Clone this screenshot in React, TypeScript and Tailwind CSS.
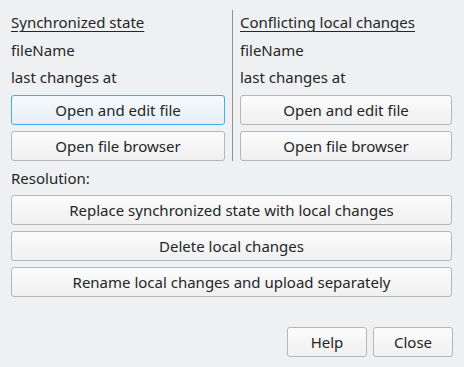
import React from 'react';

const font = { fontFamily: '"Noto Sans", "Open Sans", sans-serif' };

const Btn: React.FC<{ label: string; focused?: boolean; className?: string }> = ({ label, focused, className = '' }) => (
  <button
    className={`h-[30px] rounded-[3px] border text-[15px] leading-[19px] text-[#232627] ${
      focused
        ? 'border-[#3daee9] bg-gradient-to-b from-[#f6fafd] to-[#e7eef4]'
        : 'border-[#b4b6b8] bg-gradient-to-b from-[#fcfcfc] to-[#f0f0f0]'
    } ${className}`}
  >
    {label}
  </button>
);

const Column: React.FC<{ title: string; focused?: boolean }> = ({ title, focused }) => (
  <div className="flex flex-col pt-[13px]">
    <div className="h-[28px] leading-[19px]">
      <span className="underline underline-offset-[3px] decoration-1">{title}</span>
    </div>
    <div className="h-[27px] leading-[19px]">fileName</div>
    <div className="h-[27px] leading-[19px]">last changes at</div>
    <div className="flex flex-col gap-[6px]">
      <Btn label="Open and edit file" focused={focused} />
      <Btn label="Open file browser" />
    </div>
  </div>
);

export default function App() {
  return (
    <div className="w-[464px] h-[367px] bg-[#eff0f1] text-[15px] text-[#232627] px-[11px]" style={font}>
      <div className="flex">
        <div className="w-[214px]">
          <Column title="Synchronized state" focused />
        </div>
        <div className="w-[15px] flex justify-center">
          <div className="w-px bg-[#8f9193] mt-[10px] h-[151px] ml-[-1px]" />
        </div>
        <div className="w-[212px]">
          <Column title="Conflicting local changes" />
        </div>
      </div>
      <div className="mt-[8px] h-[26px] leading-[19px]">Resolution:</div>
      <div className="flex flex-col gap-[6px]">
        <Btn label="Replace synchronized state with local changes" className="w-[441px]" />
        <Btn label="Delete local changes" className="w-[441px]" />
        <Btn label="Rename local changes and upload separately" className="w-[441px]" />
      </div>
      <div className="mt-[30px] flex justify-end gap-[6px]">
        <Btn label="Help" className="w-[80px]" />
        <Btn label="Close" className="w-[80px]" />
      </div>
    </div>
  );
}
